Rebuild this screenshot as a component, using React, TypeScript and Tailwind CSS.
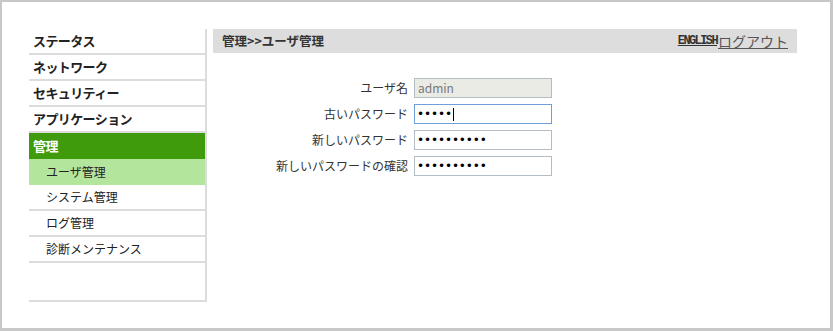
import React from 'react';

const JP = { fontFamily: '"Noto Sans CJK JP", "Noto Sans", sans-serif' };

const topItems = ['ステータス', 'ネットワーク', 'セキュリティー', 'アプリケーション'];
const subItems = ['システム管理', 'ログ管理', '診断メンテナンス'];

function Field({ label, children }: { label: string; children: React.ReactNode }) {
  return (
    <>
      <div className="h-[20px] flex items-center justify-end text-[12px] text-[#333]">{label}</div>
      {children}
    </>
  );
}

function Dots({ n }: { n: number }) {
  return (
    <span className="text-[12px] leading-none tracking-[-0.1px]" style={{ fontFamily: '"DejaVu Sans", sans-serif' }}>
      {'•'.repeat(n)}
    </span>
  );
}

export default function App() {
  return (
    <div
      className="w-[833px] h-[331px] bg-white border-l-2 border-t-2 border-r-[3px] border-b-[3px] border-[#c8c8c8] flex pl-[27px] pt-[27px] pr-[33px]"
      style={JP}
    >
      {/* side menu */}
      <div className="w-[178px] h-[273px] shrink-0 border-r-2 border-b-2 border-[#dcdcdc] flex flex-col">
        {topItems.map((t) => (
          <div key={t} className="h-[26px] border-b-2 border-[#dcdcdc] pl-[4px] flex items-center text-[13px] tracking-[-0.6px] font-bold text-[#222]">
            {t}
          </div>
        ))}
        <div className="h-[26px] bg-[#409b0c] pl-[4px] flex items-center text-[13px] tracking-[-0.6px] font-bold text-white">管理</div>
        <div className="h-[26px] bg-[#b4e59c] pl-[17px] flex items-center text-[12px] text-[#222]">ユーザ管理</div>
        {subItems.map((t) => (
          <div key={t} className="h-[26px] border-b-2 border-[#dcdcdc] pl-[17px] flex items-center text-[12px] text-[#222]">
            {t}
          </div>
        ))}
      </div>

      {/* main */}
      <div className="flex-1 ml-[6px]">
        <div className="h-[24px] bg-[#dddddd] flex items-center justify-between pl-[9px] pr-[9px]">
          <span className="text-[12.5px] font-bold text-[#333]">管理&gt;&gt;ユーザ管理</span>
          <span className="flex items-center">
            <a className="underline text-[12px] font-bold text-[#333] tracking-[-1.6px]" style={{ fontFamily: '"Liberation Mono", monospace' }}>ENGLISH</a>
            <a className="underline text-[14px] text-[#555] ml-[1px]">ログアウト</a>
          </span>
        </div>

        <div className="mt-[25px] grid grid-cols-[195px_138px] gap-x-[6px] gap-y-[6px]">
          <Field label="ユーザ名">
            <div className="h-[20px] border border-[#b4bcc6] bg-[#ebebe6] px-[3px] flex items-center text-[12px] text-[#777]">admin</div>
          </Field>
          <Field label="古いパスワード">
            <div className="h-[20px] border border-[#6f9fd8] bg-white px-[2px] flex items-center text-black">
              <Dots n={5} />
              <span className="ml-[1px] w-px h-[13px] bg-black" />
            </div>
          </Field>
          <Field label="新しいパスワード">
            <div className="h-[20px] border border-[#b4bcc6] bg-white px-[2px] flex items-center text-black">
              <Dots n={10} />
            </div>
          </Field>
          <Field label="新しいパスワードの確認">
            <div className="h-[20px] border border-[#b4bcc6] bg-white px-[2px] flex items-center text-black">
              <Dots n={10} />
            </div>
          </Field>
        </div>
      </div>
    </div>
  );
}
